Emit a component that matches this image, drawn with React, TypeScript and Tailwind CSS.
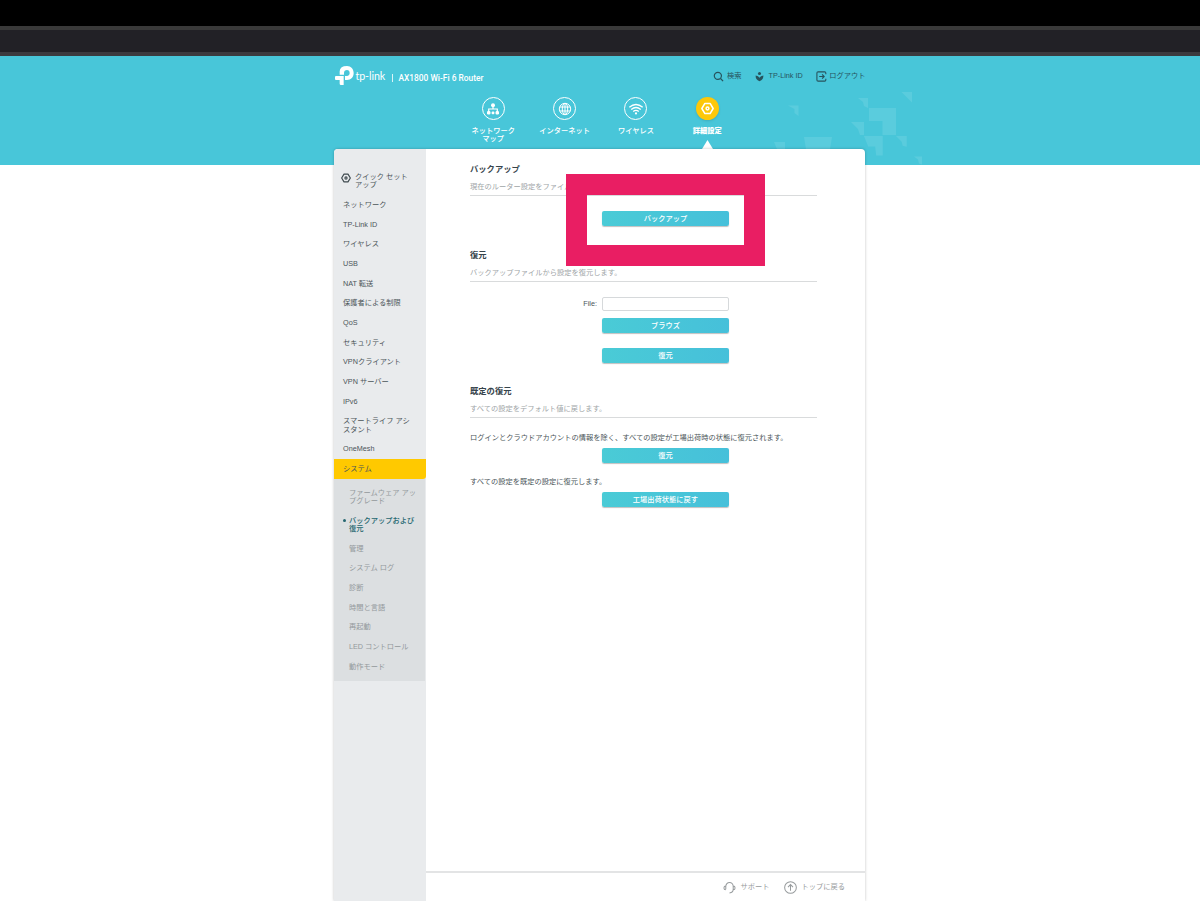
import React from 'react';

type NavItem = { label: string[]; icon?: boolean };

const NAV: NavItem[] = [
    { label: ['クイック セット', 'アップ'], icon: true },
    { label: ['ネットワーク'] },
    { label: ['TP-Link ID'] },
    { label: ['ワイヤレス'] },
    { label: ['USB'] },
    { label: ['NAT 転送'] },
    { label: ['保護者による制限'] },
    { label: ['QoS'] },
    { label: ['セキュリティ'] },
    { label: ['VPNクライアント'] },
    { label: ['VPN サーバー'] },
    { label: ['IPv6'] },
    { label: ['スマートライフ アシ', 'スタント'] },
    { label: ['OneMesh'] },
];

const SUB_NAV = [
    ['ファームウェア アッ', 'プグレード'],
    ['バックアップおよび', '復元'],
    ['管理'],
    ['システム ログ'],
    ['診断'],
    ['時間と言語'],
    ['再起動'],
    ['LED コントロール'],
    ['動作モード'],
];

function Lines({ text }: { text: string[] }) {
    return (
        <>
            {text.map((line) => (
                <span key={line} className="block whitespace-nowrap">{line}</span>
            ))}
        </>
    );
}

function HexIcon({ className }: { className?: string }) {
    return (
        <svg viewBox="0 0 12 12" className={className} fill="none" stroke="currentColor" strokeWidth="1.4" strokeLinejoin="round">
            <path d="M3.6 1.3h4.8L11.2 6l-2.8 4.7H3.6L.8 6z" />
            <circle cx="6" cy="6" r="1.3" />
        </svg>
    );
}

function Logo() {
    return (
        <svg viewBox="0 0 57 57" className="w-[19px] h-[19px] fill-white">
            {/* bowl of the "p" */}
            <path
                fillRule="evenodd"
                d="M14 22V16Q15 0 36 0C48 0 56 9 56 21S48 42 36 42H30V30H36C41 30 44 26 44 21S41 12 36 12Q27 12 27 21V26H14Z"
            />
            {/* the "t" */}
            <path d="M3 30H26V57H18Q14 57 14 53V42H3Q0 42 0 39V33Q0 30 3 30Z" />
        </svg>
    );
}

/* Scattered squares at the right end of the banner */
function Pixels() {
    return (
        <svg width="160" height="79" viewBox="770 86 160 79" className="absolute left-[770px] bottom-0 fill-white/10">
            <path d="M788 105.5h10.5V116l-4-3v-4z" />
            <path d="M858 98h10v10l-4-2-1-4z" />
            <path d="M901.5 92H912v10.500z" />
            <path d="M869 108h27v27h-13.500v-14H869z" />
            <path d="M851 122h13v13h-4l-2-6z" />
            <path d="M864 136h18.700v19.600h-6.500l-1-9h-7z" />
            <path d="M896 136h10.700v10.700l-4-1-1-4z" />
            <path d="M804 137h28l-2 12h-24z" />
            <path d="M774 142h11v7h-8z" />
            <path d="M914 156.500h8v8l-3-1-1-4z" />
        </svg>
    );
}

function Tab({ label, active, children }: { label: string[]; active?: boolean; children: React.ReactNode }) {
    return (
        <div className="relative w-[71.4px] flex flex-col items-center text-white">
            <div
                className={
                    active
                        ? 'w-[23px] h-[23px] rounded-full bg-[#fdc80a] flex items-center justify-center shadow-sm'
                        : 'w-[23px] h-[23px] rounded-full border border-white flex items-center justify-center'
                }
            >
                {children}
            </div>
            <div className={active ? 'mt-[6.5px] leading-[8.6px] text-center font-black' : 'mt-[6.5px] leading-[8.6px] text-center font-medium'}>
                <Lines text={label} />
            </div>
            {active && (
                <svg viewBox="0 0 11 9" className="absolute top-[42.5px] w-[11px] h-[9px] fill-white">
                    <path d="M5.5 0L11 9H0z" />
                </svg>
            )}
        </div>
    );
}

function SectionHead({ title, desc }: { title: string; desc: string }) {
    return (
        <div className="h-[33px] border-b border-[#d9dbdc]">
            <h2 className="text-[8.3px] leading-[13px] font-bold text-[#36444b]">{title}</h2>
            <p className="mt-[6px] leading-[10px] text-[#a0a5a7] whitespace-nowrap">{desc}</p>
        </div>
    );
}

function Button({ children }: { children: React.ReactNode }) {
    return (
        <button className="ml-[132px] block w-[127px] h-[15px] rounded-[2px] bg-linear-to-r from-[#4acbd6] to-[#46c0da] text-white font-medium leading-[15px] text-center shadow-[0_1px_1px_rgba(0,0,0,0.25)]">
            {children}
        </button>
    );
}

export default function App() {
    return (
        <div
            lang="ja"
            className="w-[1200px] h-[901px] overflow-hidden bg-white flex flex-col text-[7.25px] text-[#4b5559] font-['Liberation_Sans','Noto_Sans_CJK_JP',sans-serif]"
        >
            {/* Browser chrome */}
            <div className="h-[26px] shrink-0 bg-black"></div>
            <div className="h-[30px] shrink-0 bg-[#222126] border-t-4 border-b-4 border-t-[#393939] border-b-[#3c3b3f]"></div>

            {/* Banner */}
            <header className="relative h-[109px] shrink-0 bg-[#48c6d9]">
                <Pixels />
                <div className="mx-auto w-[531px] h-[41px] flex justify-between">
                    <div className="flex items-start pt-[9.5px] text-white">
                        <Logo />
                        <span className="ml-[2px] w-[29px] text-[10.7px] leading-[20px] tracking-[-0.1px] whitespace-nowrap font-['Lato',sans-serif]">tp-link</span>
                        <span className="ml-[7px] mt-[8px] w-px h-[8px] bg-white/80"></span>
                        <span className="ml-[6px] mt-[2px] text-[8.4px] leading-[20px] font-medium whitespace-nowrap font-['Roboto',sans-serif]">AX1800 Wi-Fi 6 Router</span>
                    </div>
                    <div className="flex items-start pt-[14px] text-[#27535d]">
                        <div className="flex items-center h-[12px]">
                            <svg viewBox="0 0 12 12" className="w-[11px] h-[11px]" fill="none" stroke="currentColor" strokeWidth="1.3">
                                <circle cx="5.3" cy="5.3" r="3.9" />
                                <path d="M8.2 8.2L11 11" />
                            </svg>
                            <span className="ml-[2.5px] leading-[12px]">検索</span>
                        </div>
                        <div className="flex items-center h-[12px] ml-[14px]">
                            <svg viewBox="0 0 10 12" className="w-[9px] h-[11px] fill-current">
                                <circle cx="5" cy="2.6" r="1.7" />
                                <path d="M.7 4.8Q3.8 5.2 5 7.4 6.2 5.200 9.300 4.800 9.600 9.300 5 11.300.4 9.300.7 4.800z" />
                            </svg>
                            <span className="ml-[4px] leading-[12px] whitespace-nowrap">TP-Link ID</span>
                        </div>
                        <div className="flex items-center h-[12px] ml-[13px]">
                            <svg viewBox="0 0 12 12" className="w-[11px] h-[11px]" fill="none" stroke="currentColor" strokeWidth="1.2">
                                <path d="M10.700 3.500V2.300Q10.700 1 9.400 1H2.300Q1 1 1 2.300v7.400Q1 11 2.300 11h7.100q1.300 0 1.300-1.300V8.500M3.500 6h5.200M6.700 3.800L8.900 6 6.700 8.200" />
                            </svg>
                            <span className="ml-[2.5px] leading-[12px]">ログアウト</span>
                        </div>
                    </div>
                </div>

                <nav className="ml-[457.5px] flex">
                    <Tab label={['ネットワーク', 'マップ']}>
                        <svg viewBox="0 0 14 14" className="w-[14px] h-[14px] fill-white">
                            <circle cx="7" cy="3.3" r="2" />
                            <rect x="1" y="9" width="3.4" height="3.4" rx="1.2" />
                            <rect x="5.6" y="9.4" width="2.800" height="2.800" rx="1" />
                            <rect x="9.6" y="9" width="3.4" height="3.4" rx="1.2" />
                            <path d="M7 4v3M2.700 9.500V7h8.600v2.500" fill="none" stroke="white" strokeWidth="1.200" />
                        </svg>
                    </Tab>
                    <Tab label={['インターネット']}>
                        <svg viewBox="0 0 14 14" className="w-[14px] h-[14px]" fill="none" stroke="white" strokeWidth="1">
                            <circle cx="7" cy="7" r="5.7" />
                            <ellipse cx="7" cy="7" rx="2.7" ry="5.7" />
                            <path d="M7 1.300v11.400M1.800 5h10.400M1.800 9h10.400" />
                        </svg>
                    </Tab>
                    <Tab label={['ワイヤレス']}>
                        <svg viewBox="0 0 16 14" className="w-[16px] h-[14px]" fill="none" stroke="white" strokeWidth="1.3">
                            <path d="M1.300 5.300Q8-.3 14.700 5.300M3.200 7.500q4.800-4 9.600 0M5.200 9.600q2.800-2.400 5.600 0" />
                            <circle cx="8" cy="11.4" r="1.1" fill="white" stroke="none" />
                        </svg>
                    </Tab>
                    <Tab label={['詳細設定']} active>
                        <HexIcon className="w-[13px] h-[13px]" />
                    </Tab>
                </nav>
            </header>

            {/* Main panel */}
            <main className="relative ml-[334px] -mt-[16px] w-[531px] h-[752px] shrink-0 flex rounded-t-[4px] bg-white shadow-[0_0_3px_rgba(0,0,0,0.25)]">
                <aside className="w-[92px] h-full rounded-tl-[4px] bg-[#e9ebed] pt-[18.3px] leading-[8.3px]">
                    <ul>
                        {NAV.map((item) => (
                            <li key={item.label[0]} className={item.icon ? 'flex items-start pl-[7px] py-[5.7px]' : 'pl-[9px] py-[5.7px]'}>
                                {item.icon && <HexIcon className="w-[10px] h-[10px] mr-[4px] text-[#3f4a4f]" />}
                                <div><Lines text={item.label} /></div>
                            </li>
                        ))}
                        <li className="pl-[9px] py-[5.7px] bg-[#ffc900] rounded-br-[3px]">システム</li>
                    </ul>
                    <ul className="w-[91px] bg-[#dcdfe1] pt-[4px] pb-[4.500px] text-[#93999c]">
                        {SUB_NAV.map((label, i) => (
                            <li key={label[0]} className={i === 1 ? 'flex pl-[9px] py-[5.7px] font-medium text-[#24666f]' : 'pl-[15px] py-[5.7px]'}>
                                {i === 1 && <span className="mt-[2.5px] mr-[3px] w-[3px] h-[3px] rounded-full bg-current"></span>}
                                <div><Lines text={label} /></div>
                            </li>
                        ))}
                    </ul>
                </aside>

                <div className="w-[439px] flex flex-col">
                    <div className="grow pl-[44px] pr-[48px] pt-[14px]">
                        <section className="h-[86px]">
                            <SectionHead title="バックアップ" desc="現在のルーター設定をファイルに保存します。" />
                            <div className="pt-[15px]">
                                <Button>バックアップ</Button>
                            </div>
                        </section>

                        <section className="h-[136px]">
                            <SectionHead title="復元" desc="バックアップファイルから設定を復元します。" />
                            <div className="pt-[15px] flex items-center">
                                <label className="w-[132px] pr-[5px] text-right leading-[14px]">File:</label>
                                <input className="w-[127px] h-[14px] border border-[#d6d9db] rounded-[2px] bg-white" readOnly />
                            </div>
                            <div className="pt-[7px] flex flex-col gap-[15px]">
                                <Button>ブラウズ</Button>
                                <Button>復元</Button>
                            </div>
                        </section>

                        <section>
                            <SectionHead title="既定の復元" desc="すべての設定をデフォルト値に戻します。" />
                            <p className="mt-[15px] mb-[5px] leading-[10px] whitespace-nowrap">
                                ログインとクラウドアカウントの情報を除く、すべての設定が工場出荷時の状態に復元されます。
                            </p>
                            <Button>復元</Button>
                            <p className="mt-[14px] mb-[5px] leading-[10px] whitespace-nowrap">すべての設定を既定の設定に復元します。</p>
                            <Button>工場出荷状態に戻す</Button>
                        </section>
                    </div>

                    <footer className="h-[30px] shrink-0 border-t-2 border-[#e3e4e5] flex items-center justify-end pt-px pr-[20px] text-[#979b9d]">
                        <svg viewBox="0 0 14 14" className="w-[13px] h-[13px]" fill="none" stroke="currentColor" strokeWidth="1.1">
                            <path d="M3 9V6a4 4.500 0 0 1 8 0v3q0 3.500-4 4M3 5.500q-2 0-2 2T3 9.500M11 5.500q2 0 2 2t-2 2" />
                        </svg>
                        <span className="ml-[4px]">サポート</span>
                        <svg viewBox="0 0 14 14" className="ml-[15px] w-[13px] h-[13px]" fill="none" stroke="currentColor" strokeWidth="1.1">
                            <circle cx="7" cy="7" r="6.3" />
                            <path d="M7 10.500V4M4.300 6.500L7 3.800l2.700 2.700" />
                        </svg>
                        <span className="ml-[4px]">トップに戻る</span>
                    </footer>
                </div>

                {/* Highlight frame around the backup button */}
                <div className="absolute left-[232px] top-[25px] w-[199px] h-[91.5px] border-[21px] border-[#e91e63]"></div>
            </main>
        </div>
    );
}
